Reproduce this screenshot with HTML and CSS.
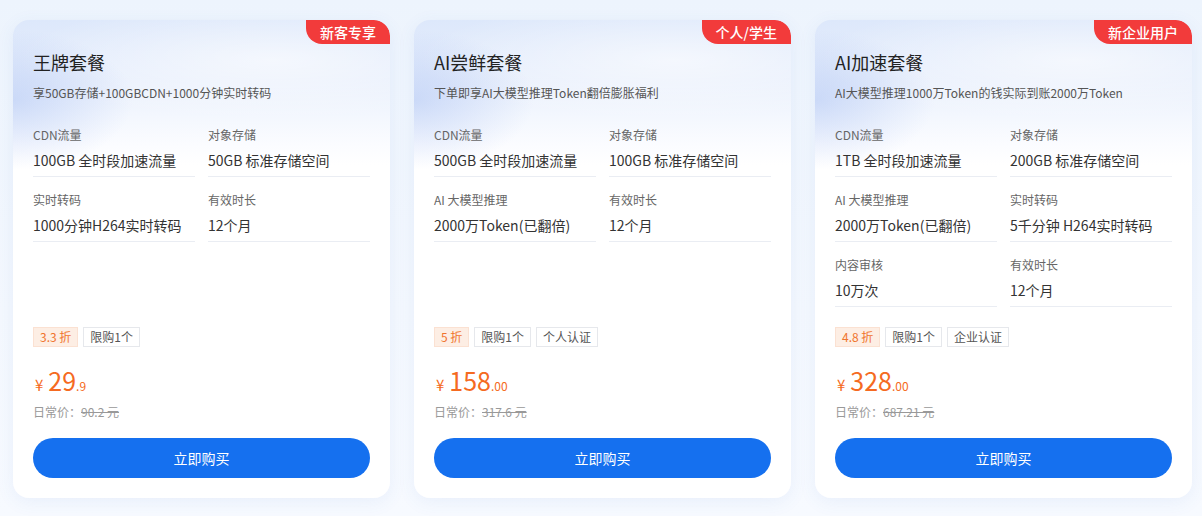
FILE: index.html
```html
<!DOCTYPE html>
<html lang="zh-CN">
<head>
<meta charset="utf-8">
<title>套餐</title>
<link rel="stylesheet" href="styles.css">
</head>
<body>
<div class="cards">
  <div class="card">
    <div class="badge">新客专享</div>
    <div class="head">
      <div class="title">王牌套餐</div>
      <div class="sub">享50GB存储+100GBCDN+1000分钟实时转码</div>
    </div>
    <div class="specs">
      <div class="spec"><div class="label">CDN流量</div><div class="value">100GB 全时段加速流量</div></div>
      <div class="spec"><div class="label">对象存储</div><div class="value">50GB 标准存储空间</div></div>
      <div class="spec"><div class="label">实时转码</div><div class="value">1000分钟H264实时转码</div></div>
      <div class="spec"><div class="label">有效时长</div><div class="value">12个月</div></div>
    </div>
    <div class="foot">
      <div class="tags"><span class="tag off">3.3 折</span><span class="tag">限购1个</span></div>
      <div class="price"><span class="cur">¥</span><span class="int">29</span><span class="dec">.9</span></div>
      <div class="orig">日常价：<s>90.2 元</s></div>
      <button class="buy">立即购买</button>
    </div>
  </div>
  <div class="card">
    <div class="badge">个人/学生</div>
    <div class="head">
      <div class="title">AI尝鲜套餐</div>
      <div class="sub">下单即享AI大模型推理Token翻倍膨胀福利</div>
    </div>
    <div class="specs">
      <div class="spec"><div class="label">CDN流量</div><div class="value">500GB 全时段加速流量</div></div>
      <div class="spec"><div class="label">对象存储</div><div class="value">100GB 标准存储空间</div></div>
      <div class="spec"><div class="label">AI 大模型推理</div><div class="value">2000万Token(已翻倍)</div></div>
      <div class="spec"><div class="label">有效时长</div><div class="value">12个月</div></div>
    </div>
    <div class="foot">
      <div class="tags"><span class="tag off">5 折</span><span class="tag">限购1个</span><span class="tag">个人认证</span></div>
      <div class="price"><span class="cur">¥</span><span class="int">158</span><span class="dec">.00</span></div>
      <div class="orig">日常价：<s>317.6 元</s></div>
      <button class="buy">立即购买</button>
    </div>
  </div>
  <div class="card">
    <div class="badge">新企业用户</div>
    <div class="head">
      <div class="title">AI加速套餐</div>
      <div class="sub">AI大模型推理1000万Token的钱实际到账2000万Token</div>
    </div>
    <div class="specs">
      <div class="spec"><div class="label">CDN流量</div><div class="value">1TB 全时段加速流量</div></div>
      <div class="spec"><div class="label">对象存储</div><div class="value">200GB 标准存储空间</div></div>
      <div class="spec"><div class="label">AI 大模型推理</div><div class="value">2000万Token(已翻倍)</div></div>
      <div class="spec"><div class="label">实时转码</div><div class="value">5千分钟 H264实时转码</div></div>
      <div class="spec"><div class="label">内容审核</div><div class="value">10万次</div></div>
      <div class="spec"><div class="label">有效时长</div><div class="value">12个月</div></div>
    </div>
    <div class="foot">
      <div class="tags"><span class="tag off">4.8 折</span><span class="tag">限购1个</span><span class="tag">企业认证</span></div>
      <div class="price"><span class="cur">¥</span><span class="int">328</span><span class="dec">.00</span></div>
      <div class="orig">日常价：<s>687.21 元</s></div>
      <button class="buy">立即购买</button>
    </div>
  </div>
</div>
</body>
</html>
```
FILE: styles.css
```css
* { box-sizing: border-box; }
html, body { margin: 0; }
body {
  background: linear-gradient(180deg, #edf4fd 0%, #f4f8fe 60%, #f7faff 100%);
  font-family: "Noto Sans CJK SC", "Noto Sans", sans-serif;
  color: #333;
  padding: 20px 13px 18px;
  height: 516px;
}
.cards {
  display: grid;
  grid-template-columns: repeat(3, 377px);
  gap: 24px;
}
.card {
  position: relative;
  background:
    radial-gradient(ellipse 120px 70px at 0px 80px, rgba(150, 178, 240, 0.4), rgba(150, 178, 240, 0) 100%),
    radial-gradient(ellipse 260px 60px at 260px 40px, rgba(255, 255, 255, 0.6), rgba(255, 255, 255, 0) 100%),
    linear-gradient(180deg, #dde8fb 0px, #e8effc 60px, #f3f7fe 95px, #fbfcff 125px, #ffffff 145px);
  border-radius: 16px;
  box-shadow: 0 4px 18px rgba(60, 110, 200, 0.08);
  padding: 29px 20px 20px;
  display: flex;
  flex-direction: column;
  overflow: hidden;
}
.badge {
  position: absolute;
  top: 0;
  right: 0;
  height: 24px;
  line-height: 24px;
  padding: 0 14px;
  background: #f23b3b;
  color: #fff;
  font-size: 14px;
  font-weight: 500;
  border-radius: 0 16px 0 16px;
}
.title {
  font-size: 18px;
  line-height: 26px;
  color: #222;
}
.sub {
  margin-top: 9px;
  font-size: 12px;
  line-height: 18px;
  color: #555;
}
.specs {
  margin-top: 24px;
  display: grid;
  grid-template-columns: 1fr 1fr;
  column-gap: 13px;
  row-gap: 14px;
}
.spec {
  border-bottom: 1px solid #eaedf3;
  padding-bottom: 5px;
}
.label {
  font-size: 12px;
  line-height: 18px;
  color: #666;
}
.value {
  margin-top: 5px;
  font-size: 14px;
  line-height: 22px;
  color: #333;
}
.foot {
  margin-top: auto;
  padding-top: 20px;
}
.tags {
  display: flex;
  gap: 5px;
}
.tag {
  height: 20px;
  line-height: 18px;
  padding: 0 6px;
  font-size: 12px;
  color: #555;
  border: 1px solid #e6e8ec;
  background: #fff;
}
.tag.off {
  color: #f0742d;
  background: #fdeee4;
  border-color: #fbe1d2;
}
.price {
  margin-top: 17px;
  height: 32px;
  line-height: 32px;
  color: #f56a21;
  padding-left: 2px;
}
.cur { font-size: 15px; margin-right: 5px; }
.int { font-size: 25px; }
.dec { font-size: 12px; }
.orig {
  margin-top: 7px;
  font-size: 12px;
  line-height: 18px;
  color: #999;
}
.orig s { color: #999; }
.buy {
  margin-top: 17px;
  display: block;
  width: 100%;
  height: 40px;
  border: 0;
  border-radius: 20px;
  background: #1570ef;
  color: #fff;
  font-family: inherit;
  font-size: 14px;
  cursor: pointer;
}
```
